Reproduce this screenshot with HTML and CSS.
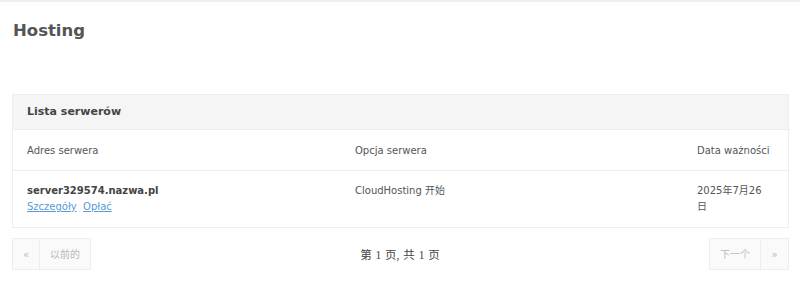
FILE: index.html
```html
<!DOCTYPE html>
<html lang="pl">
<head>
  <meta charset="UTF-8">
  <title>Hosting</title>
  <link rel="stylesheet" href="styles.css">
</head>
<body>
  <div class="strona">
    <h1>Hosting</h1>

    <div class="panel">
      <div class="panel-naglowek">Lista serwerów</div>
      <table class="tabela">
        <thead>
          <tr>
            <th class="kol-adres">Adres serwera</th>
            <th class="kol-opcja">Opcja serwera</th>
            <th class="kol-data">Data ważności</th>
          </tr>
        </thead>
        <tbody>
          <tr>
            <td>
              <div class="nazwa">server329574.nazwa.pl</div>
              <a href="#">Szczegóły</a>&nbsp; <a href="#">Opłać</a>
            </td>
            <td>CloudHosting 开始</td>
            <td class="data">2025年7月26日</td>
          </tr>
        </tbody>
      </table>
    </div>

    <div class="stronicowanie">
      <div class="przyciski">
        <span class="przycisk maly">&laquo;</span>
        <span class="przycisk">以前的</span>
      </div>
      <div class="licznik">第 1 页, 共 1 页</div>
      <div class="przyciski">
        <span class="przycisk">下一个</span>
        <span class="przycisk maly">&raquo;</span>
      </div>
    </div>
  </div>
</body>
</html>
```

FILE: styles.css
```css
* {
  box-sizing: border-box;
}

body {
  margin: 0;
  font-family: 'DejaVu Sans', Verdana, 'Noto Sans CJK SC', sans-serif;
  font-size: 10px;
  color: #555;
  background: #fff;
  border-top: 2px solid #eee;
}

.strona {
  padding: 0 11px 0 12px;
}

h1 {
  margin: 19px 0 0 1px;
  font-size: 16.5px;
  font-weight: bold;
  color: #555;
  line-height: 20px;
}

.panel {
  margin-top: 53px;
  border: 1px solid #eee;
}

.panel-naglowek {
  background: #f5f5f5;
  height: 34px;
  line-height: 34px;
  padding: 0 14px;
  font-size: 11px;
  font-weight: bold;
  color: #444;
}

.tabela {
  width: 100%;
  border-collapse: collapse;
  table-layout: fixed;
}

.tabela th,
.tabela td {
  text-align: left;
  vertical-align: top;
  padding: 0 14px;
  font-weight: normal;
  line-height: 15px;
}

.tabela th {
  height: 41px;
  vertical-align: middle;
  white-space: nowrap;
  border-top: 1px solid #eee;
  border-bottom: 1px solid #eee;
}

.tabela td {
  padding-top: 12px;
  padding-bottom: 12px;
  line-height: 16px;
}

.kol-adres { width: 328px; }
.kol-opcja { width: 342px; }
.kol-data { width: 107px; }

.tabela td.data {
  padding-right: 26px;
}

.nazwa {
  font-weight: bold;
  color: #444;
}

.tabela a {
  color: #5a9bd8;
}

.stronicowanie {
  display: flex;
  justify-content: space-between;
  align-items: center;
  margin-top: 10px;
}

.przyciski {
  display: flex;
}

.przycisk {
  height: 32px;
  line-height: 32px;
  padding: 0 10px;
  background: #fafafa;
  border: 1px solid #eee;
  color: #bbb;
  font-size: 10px;
}

.przycisk + .przycisk {
  border-left: none;
}

.przycisk.maly {
  width: 28px;
  padding: 0;
  text-align: center;
}

.licznik {
  font-family: 'Liberation Serif', 'Noto Sans CJK SC', serif;
  font-size: 11.5px;
  word-spacing: 1px;
  color: #444;
}
```
